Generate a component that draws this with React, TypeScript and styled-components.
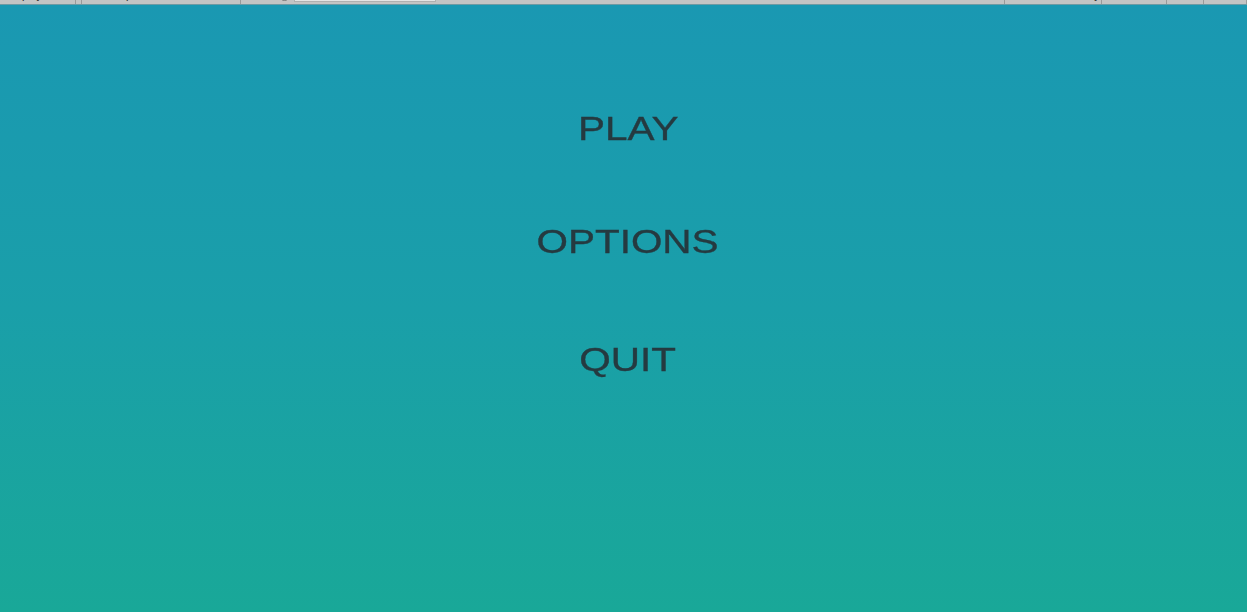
import React from 'react'
import styled, { createGlobalStyle } from 'styled-components'

const GlobalStyle = createGlobalStyle`
  html, body {
    margin: 0;
    padding: 0;
    height: 100%;
  }
  body {
    font-family: 'Liberation Sans', Arial, sans-serif;
    overflow: hidden;
  }
  #root {
    height: 100%;
  }
`

const Screen = styled.div`
  display: flex;
  flex-direction: column;
  width: 100%;
  height: 612px;
`

// editor strip that sits above the game view, mostly scrolled out of sight
const Toolbar = styled.div`
  display: flex;
  align-items: flex-end;
  height: 4px;
  flex-shrink: 0;
  overflow: hidden;
  background: #c4c4c4;
  border-bottom: 1px solid #6f9aa3;
`

const Segment = styled.div<{ $w?: number }>`
  display: flex;
  align-items: center;
  gap: 4px;
  flex: ${props => (props.$w ? `0 0 ${props.$w}px` : '1 1 auto')};
  min-width: 0;
  height: 18px;
  padding: 0 ${props => (props.$w && props.$w < 20 ? 0 : 6)}px;
  box-sizing: border-box;
  overflow: hidden;
  border-right: 1px solid #9a9a9a;
  font-size: 11px;
  color: #222;
  white-space: nowrap;
`

const SliderTrack = styled.div`
  width: 142px;
  height: 14px;
  background: #e4e4e4;
  border: 1px solid #b0b0b0;
  box-sizing: border-box;
`

const Knob = styled.span`
  width: 9px;
  height: 9px;
  border-radius: 50%;
  border: 1px solid #777;
  background: #ddd;
`

const Stage = styled.main`
  flex: 1;
  display: flex;
  flex-direction: column;
  align-items: center;
  padding: 106px 0 0 9px;
  background: linear-gradient(180deg, #1a98b2 0%, #1a9fa9 50%, #19a898 100%);
`

const MenuItem = styled.button<{ $offset?: number }>`
  margin-top: ${props => props.$offset ?? 0}px;
  padding: 0;
  border: none;
  background: none;
  font-family: 'Liberation Sans', Arial, sans-serif;
  font-size: 34px;
  line-height: 34px;
  color: #253a40;
  -webkit-text-stroke: 0.35px #253a40;
  transform: scaleX(1.19);
  filter: blur(0.4px);
  cursor: pointer;
`

export default function App(): JSX.Element {
  return (
    <>
      <GlobalStyle />
      <Screen>
        <Toolbar>
          <Segment $w={76}>Display 1 ▾</Segment>
          <Segment $w={6} />
          <Segment $w={159}>Free Aspect ▾</Segment>
          <Segment $w={764}>
            Scale <Knob /> <SliderTrack /> 1x
          </Segment>
          <Segment $w={97}>Maximize On Play</Segment>
          <Segment $w={65}>Mute Audio</Segment>
          <Segment $w={37}>Stats</Segment>
          <Segment>Gizmos ▾</Segment>
        </Toolbar>
        <Stage>
          <MenuItem>PLAY</MenuItem>
          <MenuItem $offset={79}>OPTIONS</MenuItem>
          <MenuItem $offset={84}>QUIT</MenuItem>
        </Stage>
      </Screen>
    </>
  )
}
